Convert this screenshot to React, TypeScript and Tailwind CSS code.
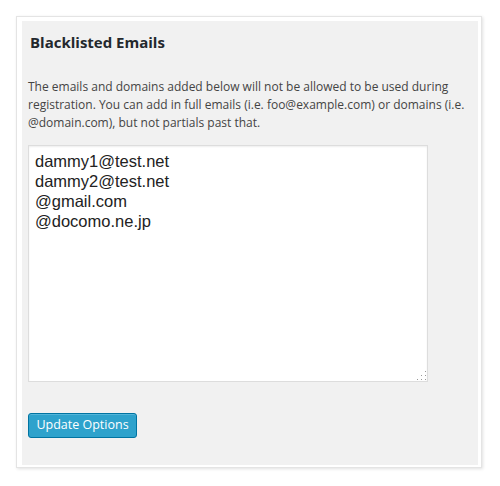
import { useState } from "react";

export default function App() {
  const [emails, setEmails] = useState(
    "dammy1@test.net\ndammy2@test.net\n@gmail.com\n@docomo.ne.jp"
  );

  return (
    <div className="w-[500px] h-[486px] bg-white pt-4 pl-4 font-['Open_Sans',sans-serif]">
      <div className="w-[466px] h-[452px] bg-white border border-[#e4e4e4] shadow-[1px_1px_3px_rgba(0,0,0,0.12)] pt-[4px] pl-[5px] pr-[3px] pb-[2px]">
        <div className="h-full bg-[#f1f1f1] pl-[6px] pt-[11px]">
          <h2 className="text-[15px] leading-[20px] font-bold text-[#23282d] pl-[2px]">
            Blacklisted Emails
          </h2>

          <p className="mt-[26px] text-[12px] leading-[18px] text-[#444] pr-2">
            The emails and domains added below will not be allowed to be used during
            registration. You can add in full emails (i.e. foo@example.com) or domains
            (i.e. @domain.com), but not partials past that.
          </p>

          <div className="relative mt-[13px] w-[400px] h-[237px]">
            <textarea
              value={emails}
              onChange={(e) => setEmails(e.target.value)}
              className="block w-full h-full resize-none bg-white border border-[#dddddd] shadow-[inset_0_1px_2px_rgba(0,0,0,0.07)] pt-[5px] px-[6px] text-[16.5px] leading-[20px] text-[#222] font-['Liberation_Sans',Arial,sans-serif] outline-none"
            />
            <div className="absolute right-[2px] bottom-[2px] grid grid-cols-3 gap-[2.5px]">
              <span className="w-[1.5px] h-[1.5px]" />
              <span className="w-[1.5px] h-[1.5px]" />
              <span className="w-[1.5px] h-[1.5px] bg-[#999]" />
              <span className="w-[1.5px] h-[1.5px]" />
              <span className="w-[1.5px] h-[1.5px] bg-[#999]" />
              <span className="w-[1.5px] h-[1.5px] bg-[#999]" />
              <span className="w-[1.5px] h-[1.5px] bg-[#999]" />
              <span className="w-[1.5px] h-[1.5px] bg-[#999]" />
              <span className="w-[1.5px] h-[1.5px] bg-[#999]" />
            </div>
          </div>

          <button
            type="button"
            className="mt-[31px] w-[109px] h-[25px] rounded-[3px] bg-[#2ea2cc] border border-[#0074a2] shadow-[inset_0_1px_0_rgba(120,200,230,0.5)] text-white text-[12.5px] leading-none"
          >
            Update Options
          </button>
        </div>
      </div>
    </div>
  );
}
